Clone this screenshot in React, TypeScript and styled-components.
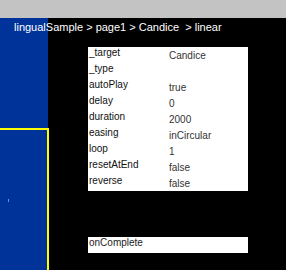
import React from "react";
import styled, { createGlobalStyle } from "styled-components";

const Global = createGlobalStyle`
  html, body { margin: 0; padding: 0; background: #000; }
  body { font-family: "Liberation Sans", Arial, Helvetica, sans-serif; }
`;

const Screen = styled.div`
  position: relative;
  width: 286px;
  height: 270px;
  background: #000;
  display: flex;
  flex-direction: column;
  overflow: hidden;
`;

const TopBar = styled.div`
  height: 18px;
  background: #c3c3c3;
  flex: none;
`;

const Body = styled.div`
  flex: 1;
  display: flex;
`;

const Sidebar = styled.div`
  width: 48px;
  display: flex;
  flex-direction: column;
  flex: none;
`;

const SideBlock = styled.div`
  height: 110px;
  background: #003399;
`;

const SelectedBlock = styled.div`
  position: relative;
  flex: 1;
  width: 47px;
  background: #003399;
  border-top: 2px solid #ffff00;
  border-right: 2px solid #ffff00;
`;

const Speck = styled.div`
  position: absolute;
  left: 8px;
  top: 69px;
  width: 1px;
  height: 3px;
  background: #6f8fd0;
`;

const Breadcrumb = styled.div`
  position: absolute;
  left: 14px;
  top: 21px;
  font-size: 11px;
  line-height: 13px;
  color: #fff;
  white-space: pre;
`;

const Content = styled.div`
  flex: 1;
  display: flex;
  flex-direction: column;
  padding: 29px 0 0 40px;
`;

const Panel = styled.div`
  width: 160px;
  background: #fff;
  display: flex;
  flex-direction: column;
`;

const Row = styled.div`
  height: 16px;
  display: grid;
  grid-template-columns: 81px 1fr;
  font-size: 10px;
  line-height: 12px;
`;

const Label = styled.div`
  padding-left: 1px;
  color: #111;
`;

const Value = styled.div`
  padding-top: 3px;
  color: #333;
`;

const EventBox = styled.div`
  margin-top: 46px;
  width: 160px;
  height: 16px;
  background: #fff;
  font-size: 10px;
  line-height: 12px;
  color: #222;
  padding-left: 1px;
  box-sizing: border-box;
`;

const rows: [string, string][] = [
  ["_target", "Candice"],
  ["_type", ""],
  ["autoPlay", "true"],
  ["delay", "0"],
  ["duration", "2000"],
  ["easing", "inCircular"],
  ["loop", "1"],
  ["resetAtEnd", "false"],
  ["reverse", "false"],
];

export default function App() {
  return (
    <>
      <Global />
      <Screen>
        <TopBar />
        <Body>
          <Sidebar>
            <SideBlock />
            <SelectedBlock>
              <Speck />
            </SelectedBlock>
          </Sidebar>
          <Content>
            <Panel>
              {rows.map(([k, v]) => (
                <Row key={k}>
                  <Label>{k}</Label>
                  <Value>{v}</Value>
                </Row>
              ))}
            </Panel>
            <EventBox>onComplete</EventBox>
          </Content>
        </Body>
        <Breadcrumb>{"lingualSample > page1 > Candice  > linear"}</Breadcrumb>
      </Screen>
    </>
  );
}
